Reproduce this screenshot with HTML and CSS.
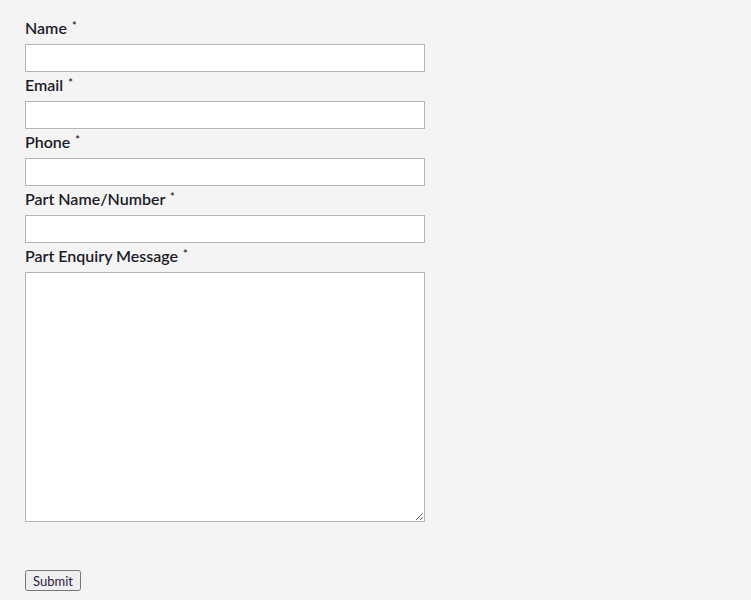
FILE: index.html
```html
<!DOCTYPE html>
<html lang="en">
<head>
    <meta charset="UTF-8">
    <meta name="viewport" content="width=device-width, initial-scale=1.0">
    <title>Part Enquiry</title>
    <link rel="stylesheet" href="styles.css">
</head>
<body>

    <!-- Part Enquiry Form -->
    <form class="enquiry-form">
        <div class="field">
            <label for="name">Name <span class="req">*</span></label>
            <input type="text" id="name">
        </div>
        <div class="field">
            <label for="email">Email <span class="req">*</span></label>
            <input type="email" id="email">
        </div>
        <div class="field">
            <label for="phone">Phone <span class="req">*</span></label>
            <input type="text" id="phone">
        </div>
        <div class="field">
            <label for="part">Part Name/Number <span class="req">*</span></label>
            <input type="text" id="part">
        </div>
        <div class="field">
            <label for="message">Part Enquiry Message <span class="req">*</span></label>
            <textarea id="message"></textarea>
        </div>
        <button type="submit" class="submit-btn">Submit</button>
    </form>

</body>
</html>
```

FILE: styles.css
```css
body {
    margin: 0;
    background-color: #f4f4f4;
    font-family: Lato, "Open Sans", sans-serif;
    color: #1c1c28;
}
.enquiry-form {
    padding: 16px 25px;
}
.field label {
    display: block;
    font-size: 16px;
    font-weight: 600;
    line-height: 22px;
    padding-top: 1px;
    padding-bottom: 5px;
}
.req {
    font-size: 11px;
    vertical-align: top;
    line-height: 18px;
    margin-left: 1px;
}
.field input,
.field textarea {
    display: block;
    box-sizing: border-box;
    width: 400px;
    height: 28px;
    margin: 0 0 1px 0;
    border: 1px solid #b4b4b4;
    background-color: white;
    font-family: inherit;
}
.field textarea {
    height: 250px;
    margin-bottom: 48px;
}
.submit-btn {
    font-family: Lato, sans-serif;
    font-size: 13px;
    color: #2a2040;
    padding: 1px 6px;
    height: 21px;
}
```
